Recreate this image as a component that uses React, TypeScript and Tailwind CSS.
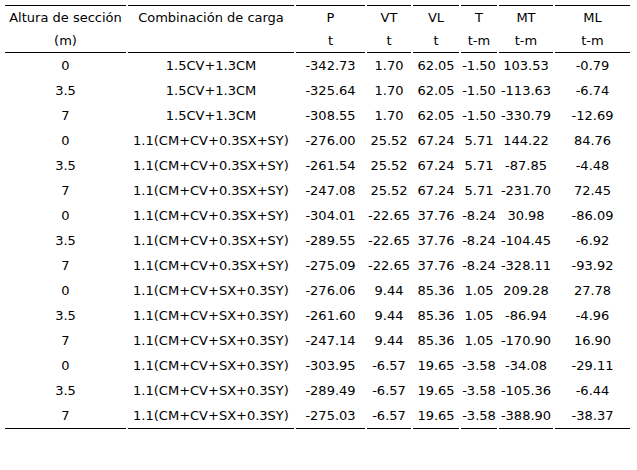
const combos = {
  a: "1.5CV+1.3CM",
  b: "1.1(CM+CV+0.3SX+SY)",
  c: "1.1(CM+CV+SX+0.3SY)",
};

const rows: string[][] = [
  ["0", combos.a, "-342.73", "1.70", "62.05", "-1.50", "103.53", "-0.79"],
  ["3.5", combos.a, "-325.64", "1.70", "62.05", "-1.50", "-113.63", "-6.74"],
  ["7", combos.a, "-308.55", "1.70", "62.05", "-1.50", "-330.79", "-12.69"],
  ["0", combos.b, "-276.00", "25.52", "67.24", "5.71", "144.22", "84.76"],
  ["3.5", combos.b, "-261.54", "25.52", "67.24", "5.71", "-87.85", "-4.48"],
  ["7", combos.b, "-247.08", "25.52", "67.24", "5.71", "-231.70", "72.45"],
  ["0", combos.b, "-304.01", "-22.65", "37.76", "-8.24", "30.98", "-86.09"],
  ["3.5", combos.b, "-289.55", "-22.65", "37.76", "-8.24", "-104.45", "-6.92"],
  ["7", combos.b, "-275.09", "-22.65", "37.76", "-8.24", "-328.11", "-93.92"],
  ["0", combos.c, "-276.06", "9.44", "85.36", "1.05", "209.28", "27.78"],
  ["3.5", combos.c, "-261.60", "9.44", "85.36", "1.05", "-86.94", "-4.96"],
  ["7", combos.c, "-247.14", "9.44", "85.36", "1.05", "-170.90", "16.90"],
  ["0", combos.c, "-303.95", "-6.57", "19.65", "-3.58", "-34.08", "-29.11"],
  ["3.5", combos.c, "-289.49", "-6.57", "19.65", "-3.58", "-105.36", "-6.44"],
  ["7", combos.c, "-275.03", "-6.57", "19.65", "-3.58", "-388.90", "-38.37"],
];

const headers: [string, string][] = [
  ["Altura de sección", "(m)"],
  ["Combinación de carga", ""],
  ["P", "t"],
  ["VT", "t"],
  ["VL", "t"],
  ["T", "t-m"],
  ["MT", "t-m"],
  ["ML", "t-m"],
];

const widths = ["w-[121px]", "w-[166px]", "w-[69px]", "w-[44px]", "w-[46px]", "w-[36px]", "w-[54px]", "w-[75px]"];

export default function App() {
  return (
    <div className="w-[637px] h-[470px] bg-white pt-[5px] pl-[3px] text-black text-[13px] font-['DejaVu_Sans',sans-serif]">
      <table className="border-separate border-spacing-x-[2px] border-spacing-y-0 table-fixed">
        <thead>
          <tr>
            {headers.map(([top, bottom], i) => (
              <th
                key={i}
                className={`${widths[i]} p-0 font-normal text-center whitespace-nowrap border-t border-b border-black align-top`}
              >
                <div className="h-[23px] leading-[23px]">{top}</div>
                <div className="h-[23px] leading-[23px]">{bottom}</div>
              </th>
            ))}
          </tr>
        </thead>
        <tbody>
          {rows.map((row, r) => (
            <tr key={r} className="h-[25px]">
              {row.map((cell, c) => (
                <td
                  key={c}
                  className={`p-0 text-center whitespace-nowrap leading-[25px] ${
                    r === rows.length - 1 ? "border-b border-black" : ""
                  }`}
                >
                  {cell}
                </td>
              ))}
            </tr>
          ))}
        </tbody>
      </table>
    </div>
  );
}
